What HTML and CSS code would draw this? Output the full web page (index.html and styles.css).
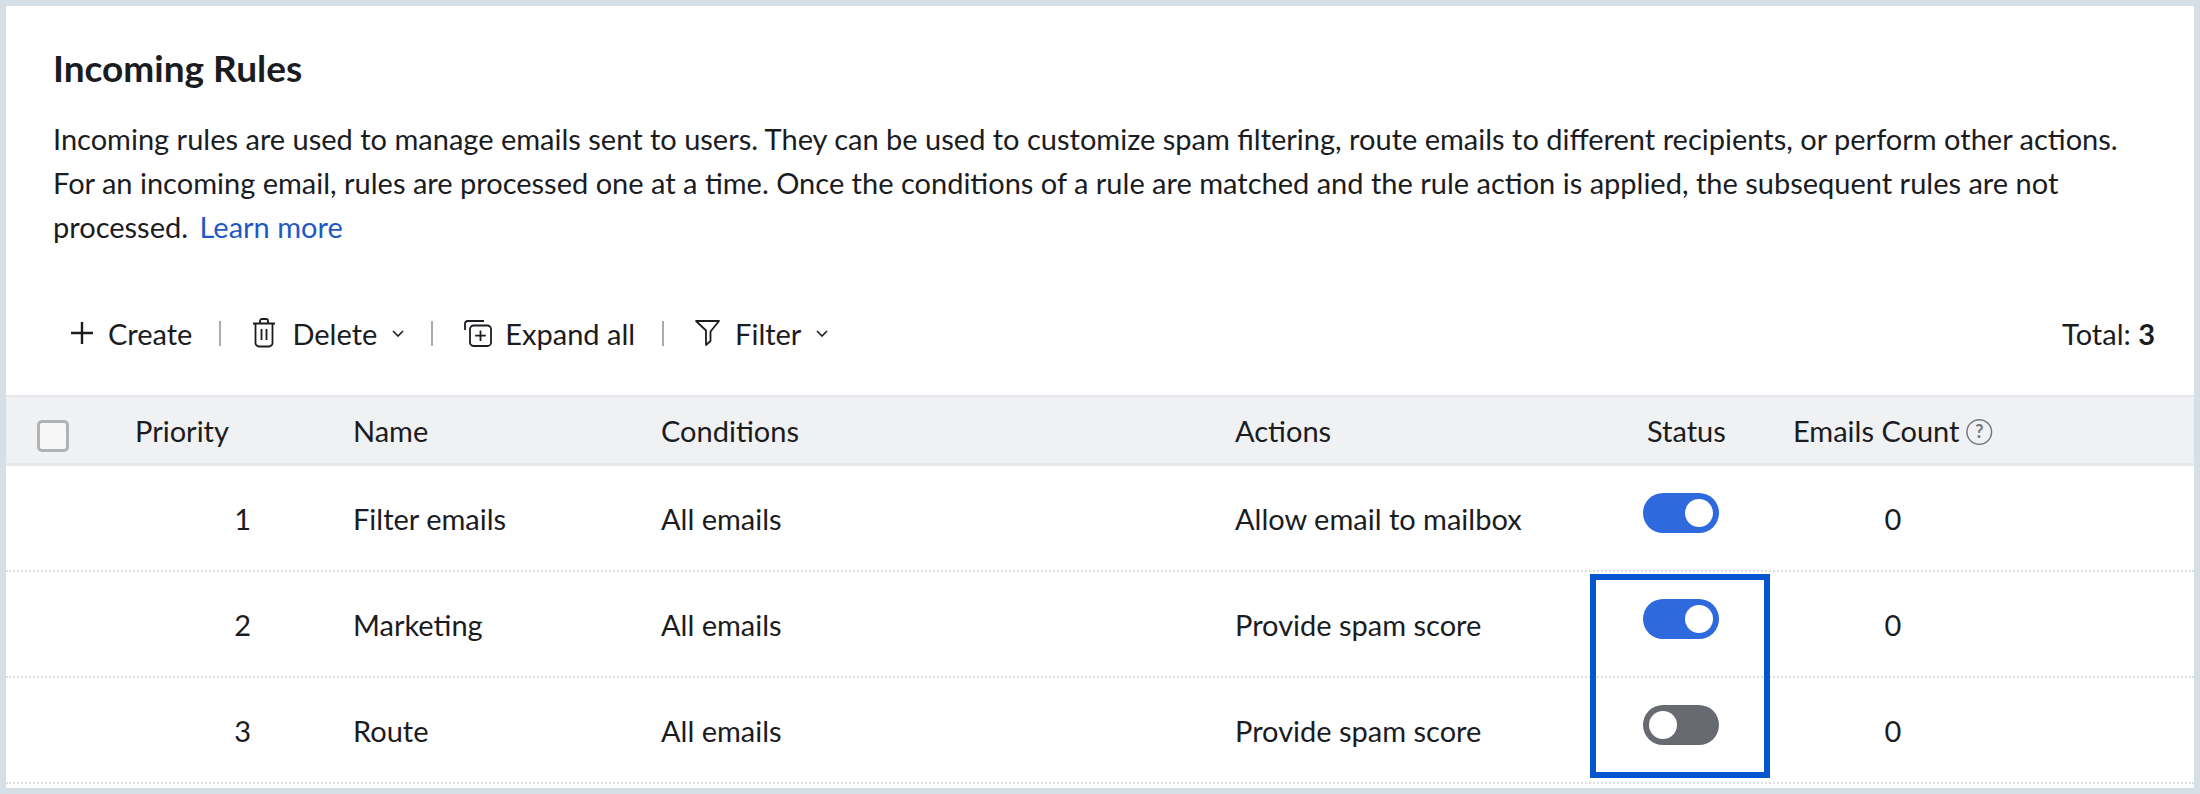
FILE: index.html
```html
<!DOCTYPE html>
<html lang="en">
<head>
    <meta charset="UTF-8">
    <title>Incoming Rules</title>
    <link rel="stylesheet" href="styles.css">
</head>
<body>
    <div class="container">
        <div class="intro">
            <h1>Incoming Rules</h1>
            <p>Incoming rules are used to manage emails sent to users. They can be used to customize spam filtering, route emails to different recipients, or perform other actions.<br>For an incoming email, rules are processed one at a time. Once the conditions of a rule are matched and the rule action is applied, the subsequent rules are not<br>processed. <a class="learn-more" href="#">Learn more</a></p>
        </div>

        <div class="toolbar">
            <div class="tool tool-create">
                <svg class="icon-plus" width="22" height="22" viewBox="0 0 22 22"><path d="M11 0v22M0 11h22" fill="none" stroke="#1b1c1f" stroke-width="2.4"/></svg>
                <span>Create</span>
            </div>
            <div class="sep"></div>
            <div class="tool tool-delete">
                <svg width="24" height="30" viewBox="0 0 24 30" fill="none" stroke="#1b1c1f" stroke-width="1.8"><path d="M1 5.5h22M3.5 5.5v19.5a3.5 3.5 0 0 0 3.5 3.5h10a3.5 3.5 0 0 0 3.5-3.5V5.5M8 5.5V3a2 2 0 0 1 2-2h4a2 2 0 0 1 2 2v2.5M9.5 11v11M14.5 11v11"/></svg>
                <span>Delete</span>
                <svg class="chevron" width="12" height="7" viewBox="0 0 12 7"><path d="M1 1l5 5 5-5" fill="none" stroke="#1b1c1f" stroke-width="1.6"/></svg>
            </div>
            <div class="sep"></div>
            <div class="tool tool-expand">
                <svg width="28" height="27" viewBox="0 0 28 27" fill="none" stroke="#1b1c1f" stroke-width="1.8"><path d="M1 10V4a3 3 0 0 1 3-3h16"/><rect x="6" y="5.5" width="21" height="20.5" rx="3.5"/><path d="M16.500 10.500v10.500M11.200 15.700h10.600"/></svg>
                <span>Expand all</span>
            </div>
            <div class="sep"></div>
            <div class="tool tool-filter">
                <svg width="25" height="26" viewBox="0 0 25 26" fill="none" stroke="#1b1c1f" stroke-width="1.8" stroke-linejoin="round"><path d="M1 1h23l-8.500 10.500v9.500l-4.500 4v-14.500z"/></svg>
                <span>Filter</span>
                <svg class="chevron" width="12" height="7" viewBox="0 0 12 7"><path d="M1 1l5 5 5-5" fill="none" stroke="#1b1c1f" stroke-width="1.6"/></svg>
            </div>
            <div class="total">Total: <b>3</b></div>
        </div>

        <div class="rules">
            <div class="row head">
                <div class="cell-check"><span class="checkbox"></span></div>
                <div>Priority</div>
                <div>Name</div>
                <div>Conditions</div>
                <div>Actions</div>
                <div class="cell-status">Status</div>
                <div class="cell-count">Emails Count
                    <svg class="help" width="28" height="28" viewBox="0 0 28 28"><circle cx="14" cy="14" r="13" fill="none" stroke="#74767c" stroke-width="1.500"/><text x="14" y="20.500" text-anchor="middle">?</text></svg>
                </div>
            </div>
            <div class="row">
                <div></div>
                <div class="cell-num">1</div>
                <div>Filter emails</div>
                <div>All emails</div>
                <div>Allow email to mailbox</div>
                <div><span class="toggle on"></span></div>
                <div class="cell-count">0</div>
            </div>
            <div class="row">
                <div></div>
                <div class="cell-num">2</div>
                <div>Marketing</div>
                <div>All emails</div>
                <div>Provide spam score</div>
                <div><span class="toggle on"></span></div>
                <div class="cell-count">0</div>
            </div>
            <div class="row">
                <div></div>
                <div class="cell-num">3</div>
                <div>Route</div>
                <div>All emails</div>
                <div>Provide spam score</div>
                <div><span class="toggle"></span></div>
                <div class="cell-count">0</div>
            </div>
            <div class="highlight"></div>
        </div>
    </div>
</body>
</html>
```

FILE: styles.css
```css
* {
    margin: 0;
    padding: 0;
    box-sizing: border-box;
}

body {
    font-family: 'Lato', sans-serif;
    font-size: 29px;
    color: #1b1c1f;
    background: #d6dfe6;
    height: 794px;
    padding: 6px;
    overflow: hidden;
}

.container {
    background: #fff;
    height: 782px;
}

.intro {
    padding: 42px 47px 0;
}

h1 {
    font-size: 37px;
    font-weight: 700;
    line-height: 40px;
    margin-bottom: 29px;
}

.intro p {
    line-height: 44px;
}

.learn-more {
    color: #2159c4;
    text-decoration: none;
    margin-left: 4px;
}

.toolbar {
    display: flex;
    align-items: center;
    height: 50px;
    margin-top: 59px;
    padding: 0 39px 0 65px;
}

.tool {
    display: flex;
    align-items: center;
}

.tool-create svg {
    margin-right: 15px;
}

.tool-delete svg:first-child {
    margin-right: 16px;
}

.tool-expand svg {
    margin-right: 13px;
}

.tool-filter svg:first-child {
    margin-right: 15px;
}

.chevron {
    margin-left: 15px;
}

.sep {
    width: 2px;
    height: 25px;
    background: #a9abb0;
    margin: 0 31px 0 27px;
}

.total {
    margin-left: auto;
}

.total b {
    font-weight: 700;
}

.rules {
    position: relative;
    margin-top: 37px;
}

.row {
    display: grid;
    grid-template-columns: 129px 218px 308px 574px 408px 150px 1fr;
    align-items: center;
    height: 106px;
    border-bottom: 2px dotted #dcdee2;
}

.row.head {
    height: 71px;
    background: #f0f1f3;
    border-top: 2px solid #e6e7ea;
    border-bottom: 3px solid #e6e7ea;
}

.cell-check {
    padding-left: 31px;
    display: flex;
}

.checkbox {
    width: 32px;
    height: 32px;
    margin-top: 12px;
    border: 3px solid #b0b2b8;
    border-radius: 5px;
    background: #f7f7f8;
}

.cell-num {
    text-align: right;
    padding-right: 102px;
}

.head .cell-status {
    padding-left: 4px;
}

.cell-count {
    width: 200px;
    text-align: center;
    white-space: nowrap;
}

.head .cell-count {
    text-align: left;
    display: flex;
    align-items: center;
    gap: 7px;
}

.help {
    margin-top: 4px;
}

.help text {
    font-family: 'Lato', sans-serif;
    font-size: 19px;
    font-weight: 700;
    fill: #74767c;
}

.toggle {
    display: block;
    position: relative;
    width: 76px;
    height: 40px;
    border-radius: 20px;
    background: #686a72;
    margin-bottom: 10px;
}

.toggle::after {
    content: '';
    position: absolute;
    top: 6px;
    left: 6px;
    width: 28px;
    height: 28px;
    border-radius: 50%;
    background: #fff;
}

.toggle.on {
    background: #2f69de;
}

.toggle.on::after {
    left: 42px;
}

/* annotation box drawn over the status column */
.highlight {
    position: absolute;
    left: 1584px;
    top: 179px;
    width: 180px;
    height: 204px;
    border: 6px solid #0455cf;
}
```
